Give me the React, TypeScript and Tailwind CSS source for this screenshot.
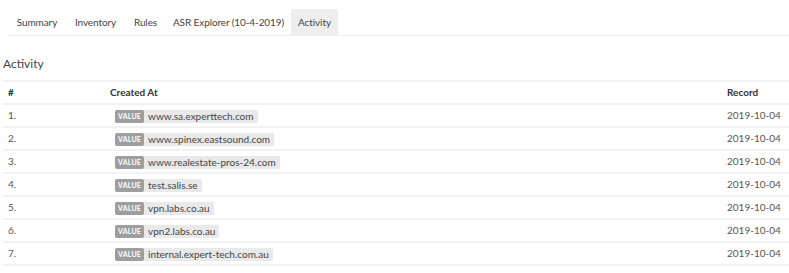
const tabs = [
	{ label: 'Summary', w: 'w-[58px]' },
	{ label: 'Inventory', w: 'w-[55px]' },
	{ label: 'Rules', w: 'w-[41px]' },
	{ label: 'ASR Explorer (10-4-2019)', w: 'w-[121px]' },
	{ label: 'Activity', w: 'w-[47px]', active: true },
]

const rows = [
	'www.sa.experttech.com',
	'www.spinex.eastsound.com',
	'www.realestate-pros-24.com',
	'test.salis.se',
	'vpn.labs.co.au',
	'vpn2.labs.co.au',
	'internal.expert-tech.com.au',
]

export default function App() {
	return (
		<div className="w-[789px] h-[273px] bg-white text-[#333] overflow-hidden" style={{ fontFamily: 'Lato, "Open Sans", sans-serif' }}>
			<div className="pt-[9px] pl-[8px]">
				<div className="flex gap-[2px] border-b border-[#eeeeee] text-[10px] leading-[26px] text-[#444] tracking-[-0.1px]">
					{tabs.map((t) => (
						<div
							key={t.label}
							className={`${t.w} shrink-0 whitespace-nowrap text-center h-[26px] rounded-t-[2px] ${t.active ? 'bg-[#eeeeee]' : ''}`}
						>
							{t.label}
						</div>
					))}
				</div>
			</div>
			<div className="pl-[3px] mt-[20px] text-[12px] leading-[16px] text-[#444]">Activity</div>
			<table className="ml-[3px] mt-[8px] w-[786px] border-collapse text-[10px]">
				<thead>
					<tr className="h-[23px] border-t-2 border-b-2 border-[#f2f2f2]">
						<th className="text-left font-bold pl-[5px] w-[107px]">#</th>
						<th className="text-left font-bold">Created At</th>
						<th className="text-left font-bold w-[62px]">Record</th>
					</tr>
				</thead>
				<tbody>
					{rows.map((r, i) => (
						<tr key={r} className="h-[23px] border-b-2 border-[#f2f2f2]">
							<td className="pl-[5px] text-[#555]">{i + 1}.</td>
							<td>
								<span className="inline-flex items-center ml-[5px] bg-[#e9e9e9] rounded-[2px] h-[13px] pr-[4px]">
									<span className="bg-[#9e9e9e] text-white text-[7px] font-bold rounded-[2px] h-[13px] leading-[13px] px-[3px] tracking-[0.2px]">
										VALUE
									</span>
									<span className="pl-[4px] text-[10px] text-[#444]">{r}</span>
								</span>
							</td>
							<td className="text-[#555]">2019-10-04</td>
						</tr>
					))}
				</tbody>
			</table>
		</div>
	)
}
